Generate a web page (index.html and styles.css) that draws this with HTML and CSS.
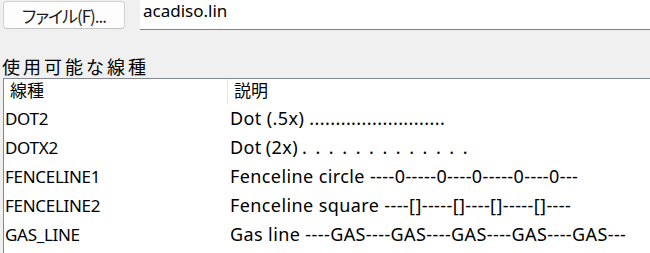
FILE: index.html
```html
<!DOCTYPE html>
<html lang="ja">
<head>
  <meta charset="UTF-8">
  <title>線種のロード</title>
  <link rel="stylesheet" href="styles.css">
</head>
<body>

<div class="file-bar">
  <button class="file-btn">ファイル(F)...</button>
  <div class="file-name">acadiso.lin</div>
</div>

<div class="list-label">使用可能な線種</div>

<div class="list-box">
  <div class="list-head">
    <div class="col-name">線種</div>
    <div class="col-desc">説明</div>
  </div>
  <div class="list-row">
    <div class="col-name">DOT2</div>
    <div class="col-desc">Dot (.5x) ..........................</div>
  </div>
  <div class="list-row">
    <div class="col-name">DOTX2</div>
    <div class="col-desc spaced">Dot (2x) .  .  .  .  .  .  .  .  .  .  .  .  .</div>
  </div>
  <div class="list-row">
    <div class="col-name">FENCELINE1</div>
    <div class="col-desc">Fenceline circle ----0-----0----0-----0----0---</div>
  </div>
  <div class="list-row">
    <div class="col-name">FENCELINE2</div>
    <div class="col-desc">Fenceline square ----[]-----[]----[]-----[]----</div>
  </div>
  <div class="list-row">
    <div class="col-name">GAS_LINE</div>
    <div class="col-desc">Gas line ----GAS----GAS----GAS----GAS----GAS---</div>
  </div>
</div>

</body>
</html>
```

FILE: styles.css
```css
html, body {
  margin: 0;
  padding: 0;
  height: 100%;
  overflow: hidden;
}

body {
  background: #f0f0f0;
  font-family: "Noto Sans", "Noto Sans CJK JP", sans-serif;
  color: #000;
}

.file-bar {
  display: flex;
  align-items: flex-start;
  height: 30px;
}

.file-btn {
  margin: 1px 0 0 3px;
  width: 122px;
  height: 28px;
  padding: 0;
  background: #fdfdfd;
  border: 1px solid #d0d0d0;
  border-bottom-color: #c4c4c4;
  border-radius: 4px;
  font-family: "Noto Sans CJK JP", sans-serif;
  font-feature-settings: "palt";
  font-size: 17px;
  letter-spacing: -1px;
  color: #1a1a1a;
}

.file-name {
  margin-left: 15px;
  flex: 1;
  height: 29px;
  background: #fff;
  border-bottom: 1px solid #808080;
  padding-left: 3px;
  font-size: 17px;
  line-height: 22px;
}

.list-label {
  margin-top: 24px;
  padding-left: 2px;
  font-family: "Noto Sans CJK JP", sans-serif;
  font-size: 18px;
  letter-spacing: 3px;
  line-height: 24px;
}

.list-box {
  margin-left: 3px;
  height: 200px;
  background: #fff;
  border-top: 1px solid #828790;
  border-left: 1px solid #828790;
}

.list-head {
  display: flex;
  height: 25px;
  font-family: "Noto Sans CJK JP", sans-serif;
  font-size: 17px;
  line-height: 22px;
}

.list-head .col-name {
  width: 217px;
  padding-left: 6px;
  border-right: 1px solid #e5e5e5;
}

.list-head .col-desc {
  padding-left: 6px;
}

.list-row {
  display: flex;
  height: 29px;
  line-height: 29px;
  white-space: pre;
}

.list-row .col-name {
  width: 224px;
  padding-left: 1px;
  font-size: 17px;
  letter-spacing: -0.3px;
}

.list-row .col-desc {
  padding-left: 1px;
  font-size: 18px;
  letter-spacing: 0.4px;
}

.list-row .spaced {
  word-spacing: -1px;
}
```
